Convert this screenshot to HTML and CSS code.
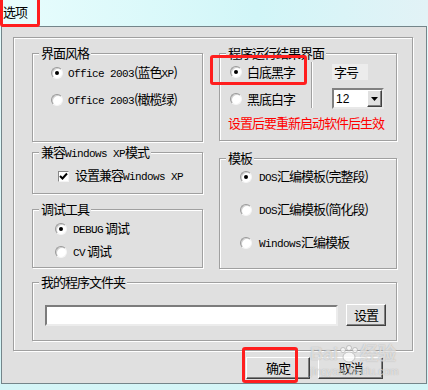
FILE: index.html
```html
<!DOCTYPE html>
<html lang="zh-CN">
<head>
    <meta charset="UTF-8">
    <title>选项</title>
    <link rel="stylesheet" href="styles.css">
</head>
<body>
    <div class="titlebar">选项</div>

    <div class="dialog">
        <div class="frame">
            <div class="cols">
                <div class="col">
                    <div class="group g-style">
                        <div class="group-title">界面风格</div>
                        <div class="opts">
                            <div class="opt"><span class="radio on"></span><span class="txt"><span class="lat">Office 2003</span>(蓝色<span class="lat">XP</span>)</span></div>
                            <div class="opt"><span class="radio"></span><span class="txt"><span class="lat">Office 2003</span>(橄榄绿)</span></div>
                        </div>
                    </div>

                    <div class="group g-compat">
                        <div class="group-title">兼容<span class="lat">Windows XP</span>模式</div>
                        <div class="opts">
                            <div class="opt"><span class="check"><svg width="9" height="9" viewBox="0 0 9 9"><path d="M1 4 L3.5 6.5 L8 1.5" fill="none" stroke="#000" stroke-width="2"/></svg></span><span class="txt">设置兼容<span class="lat">Windows XP</span></span></div>
                        </div>
                    </div>

                    <div class="group g-debug">
                        <div class="group-title">调试工具</div>
                        <div class="opts">
                            <div class="opt"><span class="radio on"></span><span class="txt"><span class="lat">DEBUG</span> 调试</span></div>
                            <div class="opt"><span class="radio"></span><span class="txt"><span class="lat">CV</span> 调试</span></div>
                        </div>
                    </div>
                </div>

                <div class="col">
                    <div class="group g-result">
                        <div class="group-title">程序运行结果界面</div>
                        <div class="result-top">
                            <div class="opts result-radios">
                                <div class="opt"><span class="radio on"></span><span class="txt">白底黑字</span></div>
                                <div class="opt"><span class="radio"></span><span class="txt">黑底白字</span></div>
                            </div>
                            <div class="vline"></div>
                            <div class="size-box">
                                <div class="size-label">字号</div>
                                <div class="select">
                                    <span class="select-val">12</span>
                                    <span class="select-btn"><svg width="7" height="4" viewBox="0 0 7 4"><path d="M0 0 H7 L3.5 4 Z" fill="#000"/></svg></span>
                                </div>
                            </div>
                        </div>
                        <div class="note">设置后要重新启动软件后生效</div>
                    </div>

                    <div class="group g-template">
                        <div class="group-title">模板</div>
                        <div class="opts">
                            <div class="opt"><span class="radio on"></span><span class="txt"><span class="lat">DOS</span>汇编模板(完整段)</span></div>
                            <div class="opt"><span class="radio"></span><span class="txt"><span class="lat">DOS</span>汇编模板(简化段)</span></div>
                            <div class="opt"><span class="radio"></span><span class="txt"><span class="lat">Windows</span>汇编模板</span></div>
                        </div>
                    </div>
                </div>
            </div>

            <div class="group g-folder">
                <div class="group-title">我的程序文件夹</div>
                <div class="folder-row">
                    <div class="textbox"></div>
                    <div class="btn btn-small">设置</div>
                </div>
            </div>
        </div>

        <div class="actions">
            <div class="btn">确定</div>
            <div class="btn btn-cancel">取消</div>
        </div>
    </div>

    <!-- red marks drawn over the screenshot -->
    <div class="mark mark-title"></div>
    <div class="mark mark-white"></div>
    <div class="mark mark-ok"></div>

    <div class="watermark">
        <div class="wm-logo">Bai<svg width="22" height="18" viewBox="0 0 22 18"><g fill="rgba(255,255,255,0.7)" stroke="rgba(150,150,150,0.5)"><circle cx="5" cy="5" r="2.5"/><circle cx="11" cy="3" r="2.5"/><circle cx="17" cy="5" r="2.5"/><ellipse cx="11" cy="12" rx="6" ry="5"/></g></svg>经验</div>
        <div class="wm-url">jingyan.baidu.com</div>
    </div>
</body>
</html>
```

FILE: styles.css
```css
body {
    margin: 0;
    width: 428px;
    height: 390px;
    overflow: hidden;
    background: linear-gradient(180deg, #e6fcfc 0%, #d4f5f7 100%);
    font-family: "Noto Sans CJK SC", sans-serif;
    font-size: 13px;
    letter-spacing: -1px;
    color: #000;
    position: relative;
}
.titlebar {
    height: 26px;
    line-height: 24px;
    padding-left: 3px;
    background: linear-gradient(90deg, #e8fdfd 0%, #d2f6f8 60%, #e2f2f6 100%);
}
.lat {
    font-family: "Liberation Mono", monospace;
    font-size: 11px;
    letter-spacing: -0.6px;
}

/* dialog */
.dialog {
    box-sizing: border-box;
    margin-left: 1px;
    width: 426px;
    height: 358px;
    background: #e0e0e0;
    border: 1px solid #74858a;
}
.frame {
    box-sizing: border-box;
    width: 400px;
    height: 314px;
    margin: 10px 0 0 11px;
    padding: 15px 15px 0 18px;
    border: 1px solid #a0a0a0;
    box-shadow: inset 1px 1px 0 #fff, 1px 1px 0 #fff;
}
.cols {
    display: flex;
    gap: 16px;
}
.col {
    display: flex;
    flex-direction: column;
}
.col:first-child { width: 171px; }
.col:last-child { width: 178px; }

.group {
    box-sizing: border-box;
    border: 1px solid #a0a0a0;
    box-shadow: inset 1px 1px 0 #fff, 1px 1px 0 #fff;
}
.group-title {
    width: fit-content;
    margin: -9px 0 0 6px;
    padding: 0 2px;
    line-height: 16px;
    background: #e0e0e0;
}
.g-style { height: 89px; }
.g-compat { height: 42px; margin-top: 10px; }
.g-debug { height: 59px; margin-top: 15px; }
.g-result { height: 88px; }
.g-template { height: 111px; margin-top: 17px; }
.g-folder { height: 59px; margin-top: 13px; }

.opts {
    display: flex;
    flex-direction: column;
}
.opt {
    display: flex;
    align-items: center;
    height: 16px;
    white-space: nowrap;
}
.txt {
    line-height: 16px;
}
.g-style .opts { padding: 4px 0 0 18px; gap: 11px; }
.g-compat .opts { padding: 6px 0 0 25px; }
.g-debug .opts { padding: 4px 0 0 22px; gap: 7px; }
.g-template .opts { padding: 3px 0 0 20px; gap: 17px; }

.radio {
    box-sizing: border-box;
    width: 12px;
    height: 12px;
    margin-right: 5px;
    flex: none;
    border-radius: 50%;
    background: #fff;
    border: 1px solid;
    border-color: #999 #f4f4f4 #f4f4f4 #999;
    box-shadow: inset 1px 1px 0 #cfcfcf;
    display: grid;
    place-items: center;
}
.radio.on::after {
    content: "";
    width: 4px;
    height: 4px;
    border-radius: 50%;
    background: #000;
}
.g-template .radio { margin-right: 7px; }
.g-debug .radio { margin-right: 6px; }

.check {
    box-sizing: border-box;
    width: 11px;
    height: 11px;
    margin-right: 6px;
    background: #fff;
    border: 1px solid;
    border-color: #888 #f4f4f4 #f4f4f4 #888;
    display: grid;
    place-items: center;
}

/* result group */
.result-top {
    display: flex;
    padding: 1px 0 0 10px;
    height: 46px;
}
.result-radios {
    width: 81px;
    padding-top: 2px;
    gap: 11px;
}
.vline {
    width: 1px;
    height: 46px;
    background: #a0a0a0;
    border-right: 1px solid #fff;
}
.size-box {
    margin-left: 19px;
    padding-top: 2px;
    display: flex;
    flex-direction: column;
    gap: 8px;
}
.size-label {
    width: 34px;
    height: 16px;
    line-height: 16px;
    padding-left: 2px;
    background: #ececec;
}
.select {
    box-sizing: border-box;
    width: 52px;
    height: 21px;
    display: flex;
    align-items: center;
    justify-content: space-between;
    background: #fff;
    border: 2px solid;
    border-color: #808080 #e8e8e8 #e8e8e8 #808080;
}
.select-val {
    padding-left: 2px;
    font-family: "Liberation Sans", sans-serif;
    font-size: 12px;
    letter-spacing: 0;
}
.select-btn {
    box-sizing: border-box;
    width: 15px;
    height: 17px;
    display: grid;
    place-items: center;
    background: #e0e0e0;
    border: 1px solid;
    border-color: #fff #404040 #404040 #fff;
    box-shadow: inset -1px -1px 0 #808080;
}
.note {
    margin-top: 7px;
    padding-left: 8px;
    line-height: 16px;
    color: #ff0000;
}

/* folder group */
.folder-row {
    display: flex;
    align-items: center;
    gap: 8px;
    padding: 14px 0 0 12px;
}
.textbox {
    box-sizing: border-box;
    width: 293px;
    height: 21px;
    background: #fff;
    border: 2px solid;
    border-color: #7c7c7c #ececec #ececec #7c7c7c;
}

.btn {
    box-sizing: border-box;
    width: 64px;
    height: 22px;
    line-height: 20px;
    text-align: center;
    background: #e0e0e0;
    border: 1px solid;
    border-color: #fff #404040 #404040 #fff;
    box-shadow: inset -1px -1px 0 #808080;
}
.btn-small { width: 40px; }
.btn-cancel { width: 65px; }
.actions {
    display: flex;
    justify-content: flex-end;
    gap: 8px;
    margin-top: 6px;
    padding-right: 43px;
}

/* red annotation boxes */
.mark {
    position: absolute;
    box-sizing: border-box;
    border: 3px solid #ff1e1e;
    border-radius: 3px;
}
.mark-title { left: 0; top: -3px; width: 40px; height: 30px; }
.mark-white { left: 210px; top: 55px; width: 97px; height: 30px; }
.mark-ok { left: 242px; top: 347px; width: 56px; height: 36px; }

.watermark {
    position: absolute;
    left: 310px;
    top: 344px;
    letter-spacing: 0;
    color: rgba(255, 255, 255, 0.6);
    text-shadow: 0 0 1px rgba(120, 120, 120, 0.6);
}
.wm-logo {
    display: flex;
    align-items: center;
    font-family: "Liberation Sans", sans-serif;
    font-size: 18px;
    font-weight: bold;
    line-height: 20px;
}
.wm-url {
    font-family: "Liberation Sans", sans-serif;
    font-size: 11px;
    line-height: 14px;
}
```
